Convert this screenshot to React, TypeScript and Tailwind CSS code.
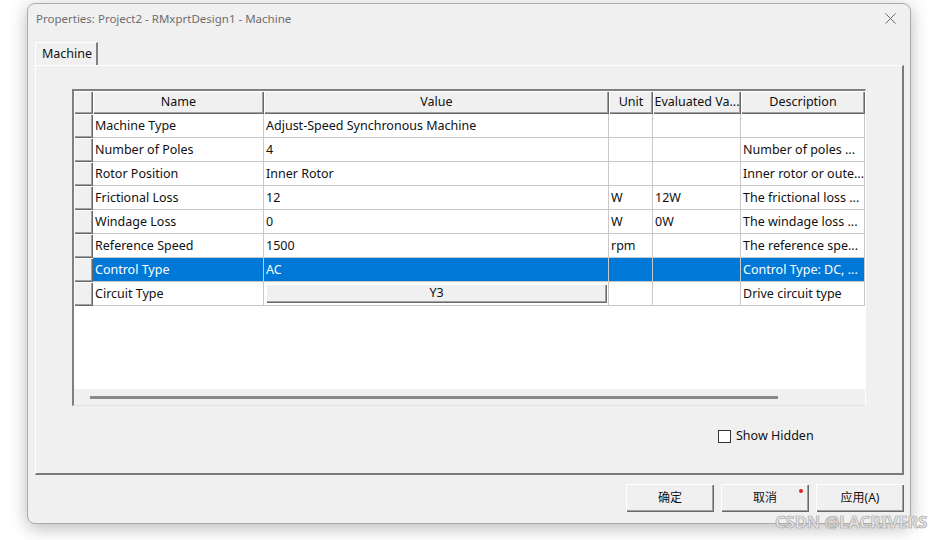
import React from "react";

const FONT = { fontFamily: '"Noto Sans", "Noto Sans CJK SC", sans-serif' };

const raised =
  "bg-[#f0f0f0] shadow-[inset_1px_1px_0_#ffffff,inset_-1px_-1px_0_#696969,inset_-2px_-2px_0_#a0a0a0]";

const COLS = [
  { key: "name", label: "Name", w: "w-[171px]" },
  { key: "value", label: "Value", w: "w-[345px]" },
  { key: "unit", label: "Unit", w: "w-[44px]" },
  { key: "evaluated", label: "Evaluated Va...", w: "w-[88px]" },
  { key: "description", label: "Description", w: "w-[124px]" },
] as const;

type Row = {
  name: string;
  value: string;
  unit: string;
  evaluated: string;
  description: string;
  selected?: boolean;
  button?: boolean;
};

const ROWS: Row[] = [
  { name: "Machine Type", value: "Adjust-Speed Synchronous Machine", unit: "", evaluated: "", description: "" },
  { name: "Number of Poles", value: "4", unit: "", evaluated: "", description: "Number of poles ..." },
  { name: "Rotor Position", value: "Inner Rotor", unit: "", evaluated: "", description: "Inner rotor or oute..." },
  { name: "Frictional Loss", value: "12", unit: "W", evaluated: "12W", description: "The frictional loss ..." },
  { name: "Windage Loss", value: "0", unit: "W", evaluated: "0W", description: "The windage loss ..." },
  { name: "Reference Speed", value: "1500", unit: "rpm", evaluated: "", description: "The reference spe..." },
  { name: "Control Type", value: "AC", unit: "", evaluated: "", description: "Control Type: DC, ...", selected: true },
  { name: "Circuit Type", value: "Y3", unit: "", evaluated: "", description: "Drive circuit type", button: true },
];

function PropertyGrid() {
  return (
    <div className="w-[794px] h-[317px] border-l-2 border-t-2 border-[#808080] border-r border-b border-r-white border-b-[#e3e3e3] bg-white flex flex-col">
      {/* header */}
      <div className="flex h-[23px] text-[12.5px] text-[#111]">
        <div className={`w-[19px] ${raised}`} />
        {COLS.map((c) => (
          <div key={c.key} className={`${c.w} ${raised} flex items-center justify-center pb-px whitespace-nowrap overflow-hidden`}>
            {c.label}
          </div>
        ))}
      </div>
      {ROWS.map((r) => (
        <div key={r.name} className="flex h-[24px] text-[12.5px]">
          <div className={`w-[19px] ${raised}`} />
          {COLS.map((c) => {
            const txt = r[c.key];
            return (
              <div
                key={c.key}
                className={`${c.w} border-r border-b border-[#c8c8c8] flex items-center overflow-hidden whitespace-nowrap ${
                  r.selected ? "bg-[#0078d7] text-white" : "text-[#111]"
                }`}
              >
                {r.button && c.key === "value" ? (
                  <div className={`ml-[2px] w-[341px] h-[19px] ${raised} flex items-center justify-center`}>
                    {txt}
                  </div>
                ) : (
                  <span className="pl-[2px] pt-[2px]">{txt}</span>
                )}
              </div>
            );
          })}
        </div>
      ))}
      <div className="flex-1 bg-white" />
      {/* horizontal scroll strip */}
      <div className="h-[16px] bg-[#f0f0f0] flex items-center pl-[16px]">
        <div className="w-[688px] h-[3px] bg-[#8a8a8a]" />
      </div>
    </div>
  );
}

function DialogButton({ label, dot }: { label: string; dot?: boolean }) {
  return (
    <div className={`relative w-[88px] h-[28px] ${raised} flex items-center justify-center text-[12px] text-[#111]`}>
      {label}
      {dot && <span className="absolute right-[6px] top-[5px] w-[4px] h-[4px] rounded-full bg-[#e02020]" />}
    </div>
  );
}

export default function App() {
  return (
    <div className="relative w-[930px] h-[540px] bg-white overflow-hidden" style={FONT}>
      <div className="ml-[27px] mt-[3px] w-[884px] h-[521px] rounded-[8px] border border-[#ababab] bg-[#f0f0f0] shadow-[0_4px_18px_rgba(0,0,0,0.28)] flex flex-col">
        {/* title bar */}
        <div className="h-[29px] flex items-center pl-[8px] pr-[14px] justify-between">
          <span className="text-[11.5px] text-[#6e6e6e]">Properties: Project2 - RMxprtDesign1 - Machine</span>
          <svg width="11" height="11" viewBox="0 0 11 11">
            <path d="M0.5 0.5 L10.5 10.5 M10.5 0.5 L0.5 10.5" stroke="#6a6a6a" strokeWidth="1" />
          </svg>
        </div>

        {/* tab */}
        <div className="mt-[9px] ml-[7px] flex">
          <div className="h-[23px] w-[63px] bg-[#f0f0f0] border-l border-t border-white border-r-2 border-r-[#808080] flex items-center pl-[6px] text-[12.5px] text-[#111]">
            Machine
          </div>
        </div>

        {/* tab panel */}
        <div className="ml-[7px] w-[869px] h-[410px] border-l border-t border-white border-r-2 border-b-2 border-r-[#7a7a7a] border-b-[#7a7a7a] flex flex-col">
          <div className="pl-[36px] pt-[23px]">
            <PropertyGrid />
          </div>
          <div className="mt-[21px] flex items-center pl-[682px] text-[12.5px] text-[#111]">
            <div className="w-[13px] h-[13px] bg-white border border-[#333]" />
            <span className="ml-[5px]">Show Hidden</span>
          </div>
        </div>

        {/* dialog buttons */}
        <div className="mt-[9px] flex justify-end gap-[7px] pr-[6px]">
          <DialogButton label="确定" />
          <DialogButton label="取消" dot />
          <DialogButton label="应用(A)" />
        </div>
      </div>

      <div className="absolute left-[775px] top-[512px] whitespace-nowrap text-[16.5px] leading-[20px] font-bold text-[#e6e6e6] [-webkit-text-stroke:0.7px_#a8a8a8]">
        CSDN @LACRIVERS
      </div>
    </div>
  );
}
